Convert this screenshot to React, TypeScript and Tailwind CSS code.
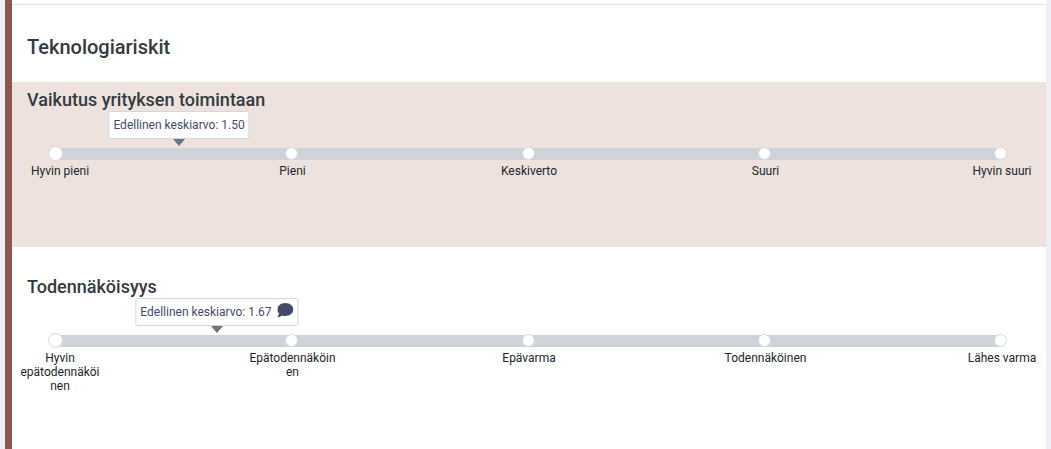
import { useState } from "react";

type Risk = {
  id: string;
  title: string;
  labels: string[];
  average: string;
  // Tooltip position along the slider, in percent.
  offset: number;
  commented?: boolean;
  highlighted?: boolean;
};

const RISKS: Risk[] = [
  {
    id: "impact",
    title: "Vaikutus yrityksen toimintaan",
    labels: ["Hyvin pieni", "Pieni", "Keskiverto", "Suuri", "Hyvin suuri"],
    average: "1.50",
    offset: 13.65,
    highlighted: true,
  },
  {
    id: "probability",
    title: "Todennäköisyys",
    labels: ["Hyvin epätodennäköinen", "Epätodennäköinen", "Epävarma", "Todennäköinen", "Lähes varma"],
    average: "1.67",
    offset: 17.6,
    commented: true,
  },
];

function CommentIcon() {
  return (
    <svg viewBox="0 0 512 512" className="size-4" fill="#454a6b" aria-hidden="true">
      <path d="M256 32C114.600 32 0 125.100 0 240c0 49.600 21.400 95 57 130.700C44.500 421.100 2.700 466 2.200 466.500c-2.200 2.300-2.800 5.700-1.500 8.700S4.800 480 8 480c66.300 0 116-31.800 140.600-51.400 32.700 12.300 69 19.400 107.400 19.400 141.400 0 256-93.100 256-208S397.400 32 256 32z" />
    </svg>
  );
}

function RiskSlider({ risk }: { risk: Risk }) {
  const [value, setValue] = useState(0);

  return (
    <section className={`h-[165px] pt-1 ${risk.highlighted ? "bg-[#eee2de]" : "bg-white"}`}>
      <h2 className="px-[15px] text-lg/7 font-medium">
        <label htmlFor={risk.id}>{risk.title}</label>
      </h2>

      <div className="relative mr-[38px] ml-9 pt-8">
        {/* Previous average, pointing down at the track */}
        <div
          className="absolute -top-[3px] flex -translate-x-1/2 flex-col items-center"
          style={{ left: `${risk.offset}%` }}
        >
          <div className="flex h-7 items-center gap-1.5 rounded-xs border border-[#d3d8e0] bg-white px-1 text-xs whitespace-nowrap text-[#454a6b]">
            <span>Edellinen keskiarvo: {risk.average}</span>
            {risk.commented && (
              <button type="button" aria-label="Kommentti" className="-mt-1">
                <CommentIcon />
              </button>
            )}
          </div>
          <span className="h-[7px] w-3 bg-[#6c757d] [clip-path:polygon(0_0,100%_0,50%_100%)]" />
        </div>

        <div className="grid h-[15px] items-center">
          <div className="col-start-1 row-start-1 mx-[7px] h-3 bg-[#ced4da]" />
          <div className="col-start-1 row-start-1 flex justify-between px-px">
            {risk.labels.map((label) => (
              <span key={label} className="size-[13px] rounded-full border border-[#d3d8e0] bg-white" />
            ))}
          </div>
          <input
            id={risk.id}
            type="range"
            min={0}
            max={4}
            value={value}
            onChange={(e) => setValue(Number(e.target.value))}
            className="col-start-1 row-start-1 h-[15px] w-full appearance-none bg-transparent [&::-webkit-slider-thumb]:size-[15px] [&::-webkit-slider-thumb]:appearance-none [&::-webkit-slider-thumb]:rounded-full [&::-webkit-slider-thumb]:border [&::-webkit-slider-thumb]:border-[#d3d8e0] [&::-webkit-slider-thumb]:bg-white"
          />
        </div>
      </div>

      <div className="flex justify-between pt-[3px] text-center text-xs/[14px] text-[#212529]">
        {risk.labels.map((label) => (
          <span key={label} className="w-[88px] break-words first:pl-2">
            {label}
          </span>
        ))}
      </div>
    </section>
  );
}

export default function App() {
  return (
    <div className="min-h-screen bg-[#eeeef6] px-[5px] font-[Roboto,sans-serif] text-[#343a40]">
      <main className="min-h-screen border-l-[7px] border-[#8d574b] bg-white pt-1">
        <div className="border-t border-[#dee0e2] px-[15px] pt-7 pb-5">
          <h1 className="text-xl/[29px] font-medium">Teknologiariskit</h1>
        </div>
        <div className="flex flex-col gap-[22px]">
          {RISKS.map((risk) => (
            <RiskSlider key={risk.id} risk={risk} />
          ))}
        </div>
      </main>
    </div>
  );
}
